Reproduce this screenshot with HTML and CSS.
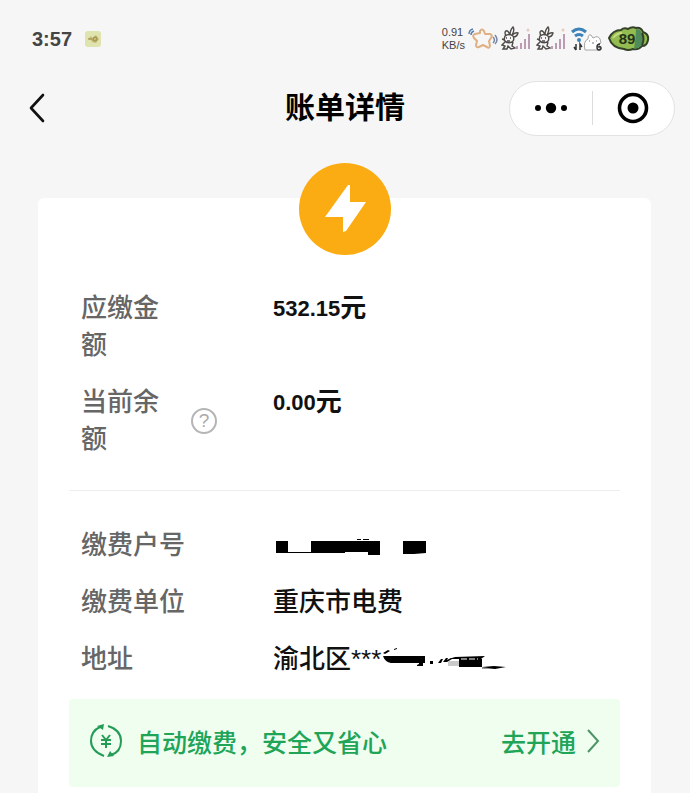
FILE: index.html
```
<!DOCTYPE html>
<html lang="zh-CN">
<head>
    <meta charset="UTF-8">
    <meta name="viewport" content="width=device-width, initial-scale=1.0">
    <title>账单详情</title>
    <link rel="stylesheet" href="styles.css">
</head>
<body>

    <!-- Status bar -->
    <div class="status-bar">
        <span class="time">3:57</span>
        <svg class="app-badge" width="16" height="16" viewBox="0 0 16 16" aria-hidden="true">
            <rect width="16" height="16" rx="3" fill="#dfe3ae"/>
            <path d="M3 8l3-3 1 2 4-3 3 4-3 4-4-1-1-2z" fill="#c5ba74"/>
            <circle cx="10" cy="8" r="2" fill="none" stroke="#9b8b4b"/>
            <path d="M3 8h4" stroke="#9b8b4b"/>
        </svg>
        <div class="status-icons">
            <div class="speed">
                <span>0.91</span>
                <span>KB/s</span>
            </div>
            <!-- Vibrate star -->
            <svg width="30" height="24" viewBox="0 0 30 24" fill="none" aria-hidden="true">
                <path d="M12 4q2-3 4 0l1 3 5 0q3 1 1 4l-2 3 1 5q-1 3-3 1l-4-2-4 2q-3 1-3-2l1-4-3-3q-2-3 1-4l5-1z" stroke="#dfb083" stroke-width="2" stroke-linejoin="round"/>
                <path d="M1 7q0-4 4-5M3 8q0-3 3-4" stroke="#5b80ad" stroke-width="1.5"/>
                <path d="M25 10q3 3 0 6M27 8q4 5 0 9" stroke="#7787a5" stroke-width="1.5"/>
            </svg>
            <!-- Signal, SIM 1 -->
            <svg class="signal" width="32" height="26" viewBox="0 0 32 26" fill="none" aria-hidden="true">
                <g stroke="#4e4b48" stroke-width="1.4">
                    <path d="M5 10Q3 6 5 5t4 4q0-5 3-8 2 3-1 8 4-3 6-2-1 4-5 4"/>
                    <path d="M4 10q4-3 8 0 2 4-1 6-5 2-8-2zM4 16l-3 3 3 1-2 3h4l1-3 3 3 4-1-3-2 1-4M1 13l3 1"/>
                    <path d="M5 12h1M9 12h1M6 15h3"/>
                </g>
                <path d="M16 23v-3M20 23v-6M24 23V13M28 23V8" stroke="#bd9bb3" stroke-width="2"/>
                <circle cx="27" cy="4" r="1.5" fill="#e5cbb8"/>
            </svg>
            <!-- Signal, SIM 2 -->
            <svg class="signal" width="32" height="26" viewBox="0 0 32 26" fill="none" aria-hidden="true">
                <g stroke="#4e4b48" stroke-width="1.4">
                    <path d="M5 10Q3 6 5 5t4 4q0-5 3-8 2 3-1 8 4-3 6-2-1 4-5 4"/>
                    <path d="M4 10q4-3 8 0 2 4-1 6-5 2-8-2zM4 16l-3 3 3 1-2 3h4l1-3 3 3 4-1-3-2 1-4M1 13l3 1"/>
                    <path d="M5 12h1M9 12h1M6 15h3"/>
                </g>
                <path d="M16 23v-3M20 23v-6M24 23V13M28 23V8" stroke="#bd9bb3" stroke-width="2"/>
                <circle cx="27" cy="4" r="1.5" fill="#e5cbb8"/>
            </svg>
            <!-- Wifi -->
            <svg width="32" height="26" viewBox="0 0 32 26" fill="none" aria-hidden="true">
                <path d="M1 6q7-6 14 0M4 10q4-3 8 0" stroke="#3d83b7" stroke-width="3"/>
                <circle cx="8" cy="14" r="2" fill="#3d83b7"/>
                <path d="M5 18v6M3 21l2 3M9 24v-6l2 3" stroke="#333" stroke-width="1.5"/>
                <path d="M14 24q-2-9 3-11 0-5 3-4l2 3q5-3 7 1l1 4-2 1 1 6z" fill="#fff" stroke="#a5a5a5"/>
                <path d="M18 15h1M25 15h1M21 17h2" stroke="#777"/>
                <path d="M29 18q-3 0-3 3t2 3 2-2-3-1" stroke="#333" stroke-width="1.5"/>
            </svg>
            <!-- Battery -->
            <div class="battery">
                <svg width="42" height="26" viewBox="0 0 42 26" aria-hidden="true">
                    <path d="M1 12q4-8 12-8 3-3 7-1 4-3 8-1 5-1 7 4 6 2 5 8-1 6-6 6-3 4-9 3-5 2-9 0Q4 22 1 12z" fill="#93bd50" stroke="#354129" stroke-width="2"/>
                    <path d="M28 3q5 0 6 5 4 6-1 12-4 3-7 3 2-10 2-20z" fill="#4f8c59"/>
                    <path d="M34 7q3 6 0 12" fill="none" stroke="#354129" stroke-width="2"/>
                    <path d="M5 12q4-5 9-5" fill="none" stroke="#c6da80" stroke-width="2"/>
                </svg>
                <span class="battery-level">89</span>
            </div>
        </div>
    </div>

    <!-- Title bar -->
    <header class="title-bar">
        <button type="button" class="back" aria-label="返回">
            <svg width="16" height="30" viewBox="0 0 16 30" fill="none">
                <path d="M14 2L2 15l12 13" stroke="#111" stroke-width="2.6" stroke-linecap="round" stroke-linejoin="round"/>
            </svg>
        </button>
        <h1>账单详情</h1>
        <div class="capsule">
            <button type="button" aria-label="更多">
                <svg width="34" height="12" viewBox="0 0 34 12">
                    <circle cx="4" cy="6" r="3"/>
                    <circle cx="17" cy="6" r="5.2"/>
                    <circle cx="30" cy="6" r="3"/>
                </svg>
            </button>
            <button type="button" aria-label="关闭">
                <svg width="32" height="32" viewBox="0 0 32 32">
                    <circle cx="16" cy="16" r="13.5" fill="none" stroke="#000" stroke-width="3.6"/>
                    <circle cx="16" cy="16" r="5.5"/>
                </svg>
            </button>
        </div>
    </header>

    <!-- Bill card -->
    <main class="card">
        <div class="bill-icon">
            <svg width="92" height="92" viewBox="0 0 92 92">
                <path d="M49 22L26 54h18v15l3-1 20-29H51V22z" fill="#fff"/>
            </svg>
        </div>

        <dl class="details amounts">
            <div class="row">
                <dt><span class="wrap">应缴金额</span></dt>
                <dd><span class="number">532.15</span>元</dd>
            </div>
            <div class="row">
                <dt>
                    <span class="wrap">当前余额</span>
                    <button type="button" class="help" aria-label="余额说明">?</button>
                </dt>
                <dd><span class="number">0.00</span>元</dd>
            </div>
        </dl>

        <dl class="details account">
            <div class="row">
                <dt>缴费户号</dt>
                <dd>
                    <svg width="156" height="24" viewBox="0 3 156 24" aria-label="已隐藏">
                        <path d="M3 10h12v11h23V10h69v14H95v-3H72v1H3zM130 10h23v12l-12 1h-11zM84 8h4v1h-4zM90 8h6v1h-6z"/>
                    </svg>
                </dd>
            </div>
            <div class="row">
                <dt>缴费单位</dt>
                <dd>重庆市电费</dd>
            </div>
            <div class="row">
                <dt>地址</dt>
                <dd>
                    <span>渝北区***</span>
                    <svg width="126" height="26" viewBox="0 2 126 26" aria-label="已隐藏">
                        <path d="M2 11h42v7h-2v3h-6v-1l2-1v-1l-16 0-12 0Q4 17 2 11z"/>
                        <path d="M2 8l5-3 2 1-5 3zM13 4l3-1v1l-3 1z"/>
                        <path d="M49 16h3v3h-3z"/>
                        <path d="M57 18l3-4h2l-2 4zM62 17l3-4h2l-1 2 4-2 1 1-5 3zM68 14l6-2 30-1-4 3H76z"/>
                        <path d="M67 16h11v5H67z" fill="#c9c9c9"/>
                        <path d="M78 14h23v8H78z"/>
                        <path d="M80 14h17" stroke="#fff" stroke-dasharray="6 2"/>
                        <path d="M101 22h14v2h-14z" fill="#999"/>
                        <path d="M101 22l12-1 12 1-11 2z"/>
                    </svg>
                </dd>
            </div>
        </dl>

        <a class="auto-pay" href="#">
            <svg width="34" height="36" viewBox="0 0 34 36" fill="none" aria-hidden="true">
                <g stroke="#249c58" stroke-width="2">
                    <path d="M11 4Q2 8 2 18t13 15"/>
                    <path d="M19 3q13 4 13 15T22 32"/>
                    <path d="M13 12l4 5 4-5M17 17v8M12 17h10M12 21h10"/>
                </g>
                <path d="M8 3l7-2-1 6zM25 33l-7 1 3-6z" fill="#249c58"/>
            </svg>
            <span class="auto-pay-text">自动缴费，安全又省心</span>
            <span>去开通</span>
            <svg class="arrow" width="14" height="26" viewBox="0 0 14 26" fill="none" aria-hidden="true">
                <path d="M2 2l10 11L2 24" stroke="#4d9468" stroke-width="2"/>
            </svg>
        </a>
    </main>

</body>
</html>
```
FILE: styles.css
```
* {
    box-sizing: border-box;
}

body {
    margin: 0;
    min-height: 100vh;
    display: flex;
    flex-direction: column;
    background-color: #f6f6f6;
    color: #111;
    font-family: "Liberation Sans", "Noto Sans CJK SC", sans-serif;
}

button {
    padding: 0;
    border: none;
    background: none;
    font-family: inherit;
    cursor: pointer;
}

svg {
    display: block;
    flex-shrink: 0;
}

/* Status bar */
.status-bar {
    display: flex;
    align-items: center;
    height: 78px;
    padding: 0 40px 0 32px;
    color: #444;
}

.time {
    font-size: 20px;
    font-weight: bold;
}

.app-badge {
    margin-left: 13px;
}

.status-icons {
    display: flex;
    align-items: center;
    gap: 3px;
    margin-left: auto;
}

.speed {
    display: flex;
    flex-direction: column;
    font-size: 11px;
    line-height: 13px;
}

.battery {
    position: relative;
    margin-left: 2px;
}

.battery-level {
    position: absolute;
    inset: 0;
    padding-right: 4px;
    color: #26331c;
    font-size: 15px;
    font-weight: bold;
    line-height: 26px;
    text-align: center;
}

/* Title bar */
.title-bar {
    display: grid;
    grid-template-columns: 1fr auto 1fr;
    align-items: center;
    height: 60px;
    padding: 0 15px;
}

.back {
    justify-self: start;
    padding-left: 14px;
}

h1 {
    margin: 0;
    color: #000;
    font-size: 30px;
    font-weight: bold;
    line-height: 40px;
}

.capsule {
    display: grid;
    grid-template-columns: 1fr 1fr;
    justify-self: end;
    width: 166px;
    height: 55px;
    border: 1px solid #e2e2e2;
    border-radius: 28px;
    background-color: #fff;
}

.capsule button {
    display: flex;
    align-items: center;
    justify-content: center;
}

.capsule button + button {
    position: relative;
}

.capsule button + button::before {
    content: '';
    position: absolute;
    left: 0;
    width: 1px;
    height: 34px;
    background-color: #ddd;
}

/* Card */
.card {
    flex: 1;
    margin: 60px 39px 0 38px;
    padding: 0 31px 6px;
    border-radius: 6px 6px 0 0;
    background-color: #fff;
}

.bill-icon {
    width: 92px;
    height: 92px;
    margin: -35px auto 0;
    border-radius: 50%;
    background-color: #fbac13;
}

.details {
    display: flex;
    flex-direction: column;
    gap: 20px;
    margin: 0;
    padding-left: 12px;
    font-size: 26px;
    line-height: 37px;
}

.amounts {
    padding-top: 35px;
    padding-bottom: 32px;
    border-bottom: 1px solid #eee;
}

.account {
    padding-top: 36px;
    padding-bottom: 21px;
}

.row {
    display: grid;
    grid-template-columns: 192px 1fr;
}

dt {
    display: flex;
    align-items: center;
    color: #666;
    font-weight: 500;
}

.wrap {
    width: 84px;
}

.help {
    width: 26px;
    height: 26px;
    margin-left: 26px;
    border: 2px solid #b5b5b5;
    border-radius: 50%;
    color: #aaa;
    font-size: 19px;
    line-height: 22px;
}

dd {
    display: flex;
    margin: 0;
    font-weight: bold;
}

.number {
    font-size: 22px;
}

.account dd {
    align-items: center;
    font-weight: 500;
}

/* Auto payment banner */
.auto-pay {
    display: flex;
    align-items: center;
    height: 88px;
    padding: 0 20px 4px;
    border-radius: 4px;
    background-color: #effeef;
    color: #20a458;
    font-size: 25px;
    font-weight: 500;
    text-decoration: none;
}

.auto-pay-text {
    flex: 1;
    margin-left: 14px;
}

.arrow {
    margin-left: 10px;
}
```
